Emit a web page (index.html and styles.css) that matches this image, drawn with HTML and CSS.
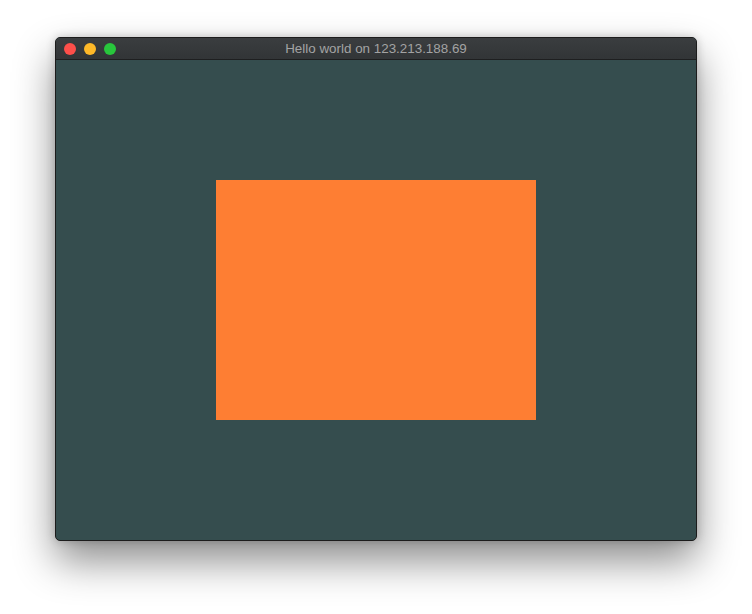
FILE: index.html
```html
<!DOCTYPE html>
<html>
<head>
<meta charset="utf-8">
<link rel="stylesheet" href="styles.css">
</head>
<body>
<div class="stage">
  <div class="window">
    <div class="titlebar">
      <div class="lights">
        <span class="light red"></span>
        <span class="light yellow"></span>
        <span class="light green"></span>
      </div>
      <div class="title">Hello world on 123.213.188.69</div>
    </div>
    <div class="content">
      <div class="rect"></div>
    </div>
  </div>
</div>
</body>
</html>
```
FILE: styles.css
```css
html, body {
  margin: 0;
  padding: 0;
  background: #ffffff;
  width: 752px;
  height: 614px;
  overflow: hidden;
}
.stage {
  padding: 37px 0 0 55px;
}
.window {
  width: 640px;
  border: 1px solid #1c1c1c;
  border-radius: 5px;
  overflow: hidden;
  background: #354d4e;
  box-shadow: 0 20px 40px rgba(0,0,0,0.45), 0 0 10px rgba(0,0,0,0.2);
}
.titlebar {
  position: relative;
  height: 21px;
  background: linear-gradient(#3a3d3f, #323537);
  border-bottom: 1px solid #1e1f20;
  display: flex;
  align-items: center;
  justify-content: center;
}
.lights {
  position: absolute;
  left: 8px;
  top: 5px;
  display: flex;
  gap: 8px;
}
.light {
  width: 12px;
  height: 12px;
  border-radius: 50%;
  display: block;
}
.red { background: #fe4f4a; }
.yellow { background: #feb828; }
.green { background: #28c63c; }
.title {
  font-family: "Liberation Sans", Arial, sans-serif;
  font-size: 13.4px;
  color: #a3a3a3;
  line-height: 21px;
}
.content {
  height: 480px;
  display: flex;
  align-items: center;
  justify-content: center;
}
.rect {
  width: 320px;
  height: 240px;
  background: #fe7e33;
}
```
